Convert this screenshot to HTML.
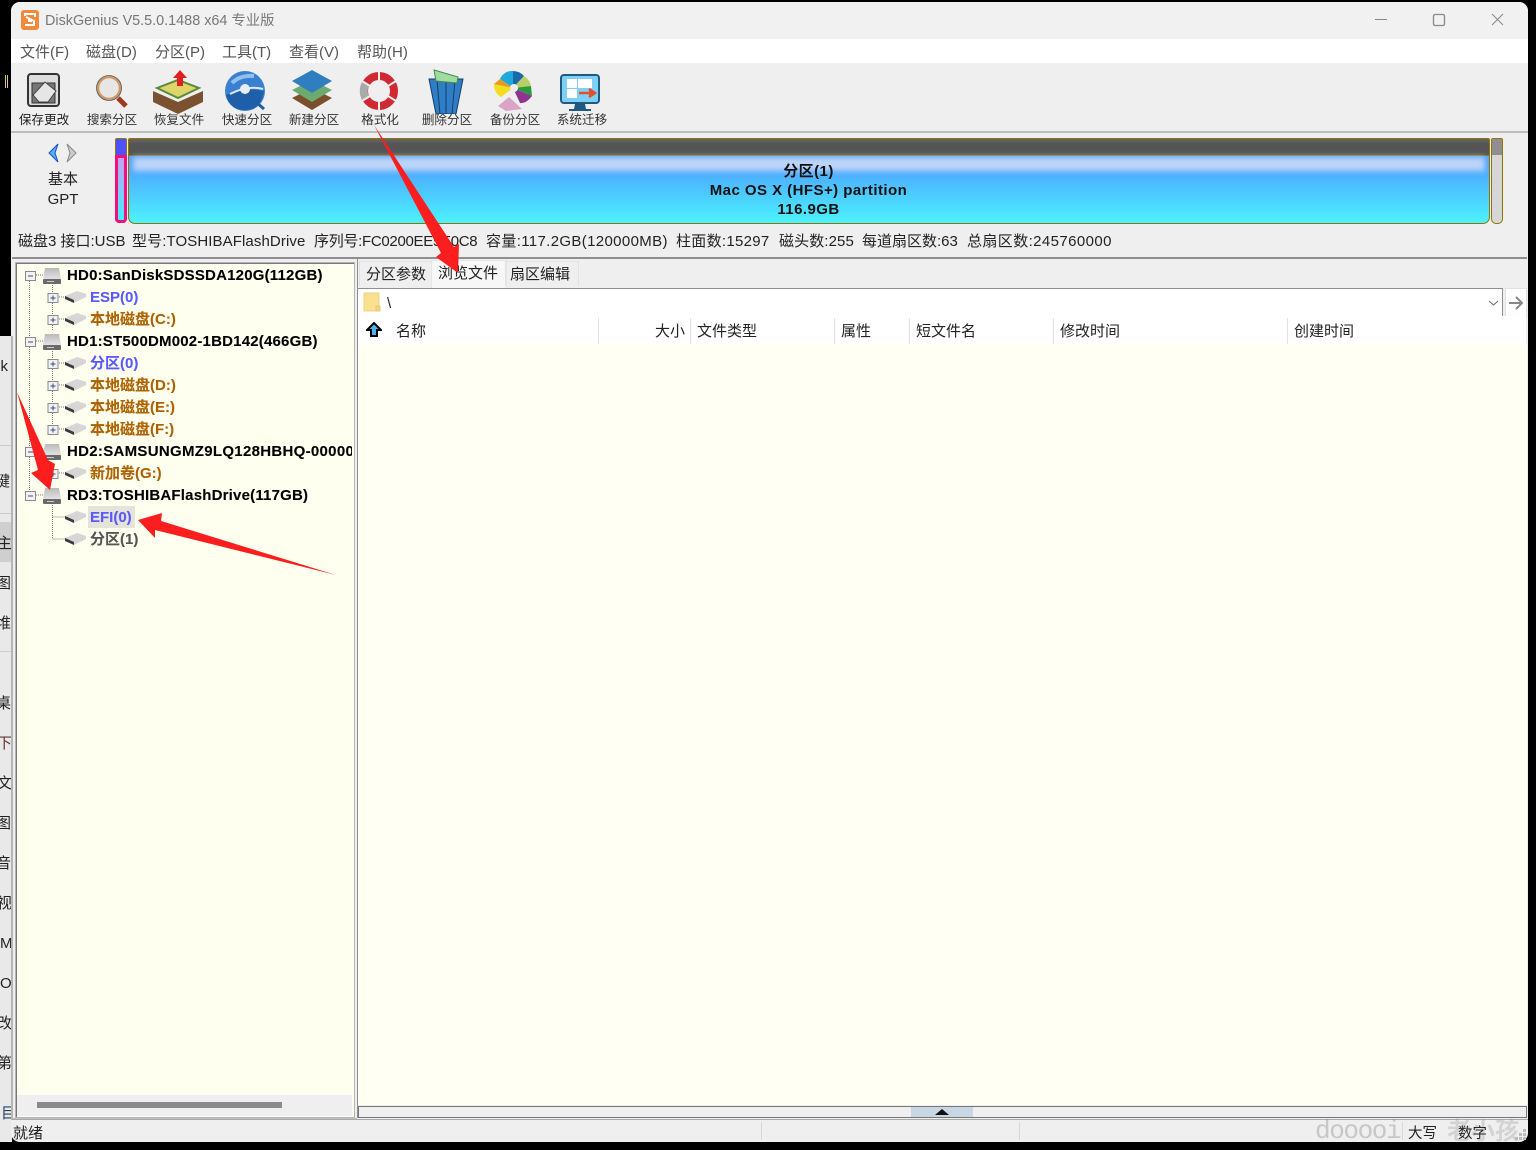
<!DOCTYPE html>
<html lang="zh"><head><meta charset="utf-8"><title>DiskGenius</title>
<style>
html,body{margin:0;padding:0;background:#000}
body{width:1536px;height:1150px;position:relative;overflow:hidden;font-family:"Liberation Sans","Noto Sans CJK SC",sans-serif;font-size:14px;color:#000}
.a{position:absolute;white-space:nowrap}
.m{top:44px;font-size:15px;line-height:18px;color:#555}
.tb{top:112px;font-size:12.6px;line-height:16px;color:#333;width:70px;text-align:center}
.tr{font-size:15px;font-weight:bold;line-height:20px;letter-spacing:.2px;-webkit-text-stroke:.1px;margin-top:1px}
.d{color:#000;left:67px}.p{left:90px;letter-spacing:0}.b{color:#5a5aff}.o{color:#ad6200}.g{color:#555}
.h{top:323px;font-size:15px;line-height:18px;color:#222}
.sep{position:absolute;top:318px;width:1px;height:26px;background:#e2e2e2}
.s{left:0;font-size:15px;width:11px;overflow:hidden;line-height:18px;color:#222}
.st{top:233px;font-size:15px;line-height:18px;color:#222}
</style></head><body>
<!-- behind window -->
<div class="a" style="left:0;top:336px;width:12px;height:806px;background:#e9e9e9"></div>
<div class="a" style="left:0;top:522px;width:12px;height:40px;background:#cfcfcf"></div>
<div class="a" style="left:0;top:445px;width:11px;height:1px;background:#ccc"></div>
<div class="a" style="left:0;top:513px;width:11px;height:1px;background:#ccc"></div>
<div class="a" style="left:0;top:651px;width:11px;height:1px;background:#ccc"></div>
<div class="a" style="left:5px;top:75px;width:1px;height:13px;background:#d8c890"></div>
<div class="a" style="left:7px;top:75px;width:1px;height:13px;background:#d8c890"></div>
<div class="a s" style="top:358px;text-indent:-7px">sk</div>
<div class="a s" style="top:473px;text-indent:-5px">键</div>
<div class="a s" style="top:535px;text-indent:-3px">主</div>
<div class="a s" style="top:575px;text-indent:-4px">图</div>
<div class="a s" style="top:615px;text-indent:-4px">堆</div>
<div class="a s" style="top:695px;text-indent:-4px">桌</div>
<div class="a s" style="top:735px;text-indent:-3px;color:#633">下</div>
<div class="a s" style="top:775px;text-indent:-3px">文</div>
<div class="a s" style="top:815px;text-indent:-4px">图</div>
<div class="a s" style="top:855px;text-indent:-4px">音</div>
<div class="a s" style="top:895px;text-indent:-3px">视</div>
<div class="a s" style="top:935px;text-indent:0">M</div>
<div class="a s" style="top:975px;text-indent:0">O</div>
<div class="a s" style="top:1015px;text-indent:-3px">改</div>
<div class="a s" style="top:1055px;text-indent:-3px">第</div>
<div class="a s" style="top:1105px;text-indent:1px;color:#246">目</div>

<!-- window -->
<div class="a" style="left:11px;top:2px;width:1517px;height:1140px;background:#efefef;border-radius:9px;overflow:hidden">
 <div class="a" style="left:0;top:0;width:1517px;height:37px;background:#f1f1f1"></div>
 <div class="a" style="left:0;top:37px;width:1517px;height:24px;background:#fff"></div>
 <div class="a" style="left:0;top:129px;width:1517px;height:2px;background:#bdbdbd"></div>
 <div class="a" style="left:0;top:334px;width:2px;height:784px;background:#b5b5b5"></div>
</div>
<!-- title -->
<svg class="a" style="left:21px;top:10px" width="18" height="20" viewBox="0 0 18 20"><rect width="18" height="20" rx="3" fill="#f08a3c"/><path d="M4 6V4h10v3M5 7l8 4v4H4" fill="none" stroke="#fff" stroke-width="2"/><rect x="7" y="9" width="4" height="3" fill="#fff"/></svg>
<div class="a" style="left:45px;top:12px;font-size:14.4px;line-height:18px;color:#777">DiskGenius V5.5.0.1488 x64 专业版</div>
<svg class="a" style="left:1370px;top:10px" width="145" height="20" fill="none" stroke="#888" stroke-width="1"><path d="M5 9.500h12"/><rect x="63.500" y="4.500" width="11" height="11" rx="1.500" stroke-width="1.300"/><path d="M122 4l11 11M133 4l-11 11"/></svg>
<!-- menu -->
<div class="a m" style="left:20px">文件(F)</div><div class="a m" style="left:86px">磁盘(D)</div><div class="a m" style="left:155px">分区(P)</div><div class="a m" style="left:222px">工具(T)</div><div class="a m" style="left:289px">查看(V)</div><div class="a m" style="left:357px">帮助(H)</div>

<!-- toolbar icons -->
<svg class="a" style="left:0;top:64px" width="620" height="50" viewBox="0 0 620 50">
 <rect x="28" y="10" width="31" height="32" rx="3" fill="#ddd" stroke="#333" stroke-width="2"/><rect x="32" y="19" width="23" height="20" fill="#777" stroke="#333"/><path d="M33 31l12-13 11 9-8 11H39z" fill="#e6e6e6" stroke="#444"/>
 <circle cx="109" cy="24" r="11" fill="#e6e6e6" stroke="#c96" stroke-width="2.500"/><circle cx="109" cy="24" r="12.500" fill="none" stroke="#555" stroke-width=".8"/><path d="M118 34l8 8" stroke="#9b3a1e" stroke-width="5"/>
 <path d="M153 27l25 11 25-11v11l-25 12-25-12z" fill="#7a5230"/><path d="M157 24l21-8 21 8-21 10z" fill="#ddd56a" stroke="#5a8a3a" stroke-width="2"/><path d="M177 22V14h-4l7-8 7 8h-4v8z" fill="#e02020"/>
 <circle cx="245" cy="27" r="20" fill="#3b7fd0"/><path d="M226 31q18-8 38-4-3 19-19 19-15 0-19-15z" fill="#1f5ea8"/><path d="M230 30q18-9 33-5" stroke="#dbe8f5" stroke-width="2" fill="none"/><path d="M232 19q8-8 22-7" stroke="#8fc0ee" stroke-width="4" fill="none"/><circle cx="245" cy="25" r="5" fill="#e8eef5"/><path d="M256 38l8 7" stroke="#1f5ea8" stroke-width="3"/>
 <path d="M292 34l20-10 20 10-20 12z" fill="#7a4f2c"/><path d="M292 26l20-10 20 10-20 12z" fill="#6bab6f"/><path d="M292 17l20-11 20 11-20 12z" fill="#2f7fc0"/>
 <circle cx="379" cy="27" r="15" fill="none" stroke="#cf2a33" stroke-width="8"/><path d="M365.500 20a15 15 0 0 0 0 14" fill="none" stroke="#aaa" stroke-width="8"/><path d="M379 7v9M379 38v9M362 17l8 5M396 17l-8 5M362 37l8-5M396 37l-8-5" stroke="#efefef" stroke-width="2"/>
 <path d="M429 15h34l-7 35h-20z" fill="#2f7ec4" stroke="#123f70"/><path d="M437 16l3 34M446 16v34M455 16l-3 34" stroke="#123f70"/><path d="M434 6l24 7-1 6-21-2z" fill="#9fdca0" stroke="#4a8a4a"/>
 <path d="M513 7a13 13 0 0 0-13 8l13 9z" fill="#1fa8dc"/><path d="M513 7a15 15 0 0 1 11 5l-11 12z" fill="#1a6aaa"/><path d="M524 12q6 4 7 10l-18 2z" fill="#b9cf65"/><path d="M531 22l1 10-19-8z" fill="#2b9a3d"/><path d="M532 32q-6 8-12 7l-7-15z" fill="#8d3590"/><path d="M494 20l6-5 13 9-17 3z" fill="#e99a20"/><path d="M494 20l19 4-12 9q-7-4-7-13z" fill="#f2dd1f"/><path d="M509 33l13 12-16 2-8-5z" fill="#d8a5c7"/><circle cx="514" cy="24" r="4" fill="#eee"/>
 <rect x="561" y="11" width="38" height="28" rx="3" fill="#7fd0f5" stroke="#1f5a80" stroke-width="2"/><rect x="567" y="15" width="10" height="9" fill="#fff"/><rect x="578" y="15" width="14" height="9" fill="#fff"/><rect x="567" y="25" width="10" height="9" fill="#fff"/><path d="M579 29h5m0 0h8m-3-4l6 4-6 4" stroke="#e0502a" stroke-width="2.500" fill="#e0502a"/><path d="M575 40h10l1 5h5v2h-22v-2h5z" fill="#1f5a80"/>
</svg>
<div class="a tb" style="left:9px;color:#222">保存更改</div><div class="a tb" style="left:77px">搜索分区</div><div class="a tb" style="left:144px">恢复文件</div><div class="a tb" style="left:212px">快速分区</div><div class="a tb" style="left:279px">新建分区</div><div class="a tb" style="left:345px">格式化</div><div class="a tb" style="left:412px">删除分区</div><div class="a tb" style="left:480px">备份分区</div><div class="a tb" style="left:547px">系统迁移</div>

<!-- disk bar -->
<svg class="a" style="left:46px;top:143px" width="34" height="20"><path d="M12 1L3 10l9 9 -3-9z" fill="#58aef5" stroke="#1a4fc0"/><path d="M21 1l9 9-9 9 3-9z" fill="#ccc" stroke="#888"/></svg>
<div class="a" style="left:23px;top:170px;width:80px;text-align:center;font-size:15px;line-height:20px;color:#222">基本<br>GPT</div>
<div class="a" style="left:115px;top:138px;width:10px;height:16px;background:#5050f8;border:1px solid #917400;border-radius:2px 2px 0 0"></div>
<div class="a" style="left:115px;top:155px;width:6px;height:62px;background:linear-gradient(#c8a0f0,#40f0ff);border:3px solid #f0107c;border-radius:0 0 4px 4px"></div>
<div class="a" style="left:128px;top:138px;width:1360px;height:84px;border:1px solid #917400;border-radius:2px 2px 7px 7px;background:linear-gradient(#4da2ff 30%,#4cf2ff 100%);overflow:hidden">
 <div class="a" style="left:0;top:0;width:100%;height:16px;background:linear-gradient(#666,#555 30%,#555);border-bottom:1px solid #917400"></div>
 <div class="a" style="left:4px;top:18px;width:1352px;height:14px;background:#bcd4f8;filter:blur(3px)"></div>
</div>
<div class="a" style="left:128px;top:162px;width:1361px;text-align:center;font-size:15px;font-weight:bold;line-height:19px;letter-spacing:.45px;color:#111">分区(1)<br>Mac OS X (HFS+) partition<br>116.9GB</div>
<div class="a" style="left:1491px;top:138px;width:10px;height:84px;border:1px solid #917400;border-radius:2px 2px 5px 5px;background:#d6d6d6"><div style="height:16px;background:#8f8f8f"></div></div>

<!-- info -->
<div class="a st" style="left:18px">磁盘3 接口:USB</div><div class="a st" style="left:132px;letter-spacing:.1px">型号:TOSHIBAFlashDrive</div><div class="a st" style="left:314px;letter-spacing:-.3px">序列号:FC0200EE5E0C8</div><div class="a st" style="left:486px;letter-spacing:.35px">容量:117.2GB(120000MB)</div><div class="a st" style="left:676px;letter-spacing:.3px">柱面数:15297</div><div class="a st" style="left:779px;letter-spacing:.1px">磁头数:255</div><div class="a st" style="left:862px">每道扇区数:63</div><div class="a st" style="left:967px;letter-spacing:.4px">总扇区数:245760000</div>

<!-- split -->
<div class="a" style="left:12px;top:257px;width:1515px;height:2px;background:#8f8f8f"></div>
<div class="a" style="left:15px;top:262px;width:338px;height:854px;background:#fffff0;border:1px solid #b5b5b5;box-shadow:inset 1px 1px 0 #777"></div>
<div class="a" style="left:17px;top:1095px;width:335px;height:21px;background:#efefef"></div>
<div class="a" style="left:37px;top:1102px;width:245px;height:6px;background:#8a8a8a"></div>
<div class="a" style="left:12px;top:1118px;width:345px;height:2px;background:#c0c0c0"></div>

<!-- tree lines & icons -->
<svg class="a" style="left:16px;top:263px;width:336px;height:300px" width="336" height="300">
 <defs>
  <linearGradient id="dk" x1="0" y1="0" x2="0" y2="1"><stop offset="0" stop-color="#bbb"/><stop offset="1" stop-color="#e2e2e2"/></linearGradient>
  <g id="hd"><path d="M29 5h14l2 11H27z" fill="url(#dk)"/><rect x="27" y="16" width="18" height="5" rx="1" fill="#6a6a6a"/><rect x="31" y="18" width="7" height="1" fill="#ccc"/></g>
  <g id="pt"><path d="M49 33l12-5 9 3v3l-12 6z" fill="#d6d6d6"/><path d="M49 33l9 4v3l-9-4z" fill="#3a3a3a"/></g>
 </defs>
 <g stroke="#777" stroke-dasharray="1 1" fill="none"><path d="M13.500 18V232M36.500 18V68M36.500 84V172M36.500 234V276h13M36.500 254h13M20 12h7M20 78h7M20 188h7M20 232h7M43 34h6M43 56h6M43 100h6M43 122h6M43 144h6M43 166h6M43 210h6"/></g>
 <g fill="#f2f2f2" stroke="#8a8a8a"><rect x="9.500" y="8.500" width="10" height="9"/><rect x="9.500" y="74.500" width="10" height="9"/><rect x="9.500" y="184.500" width="10" height="9"/><rect x="9.500" y="228.500" width="10" height="9"/>
 <rect x="32" y="30.500" width="10" height="9"/><rect x="32" y="52.500" width="10" height="9"/><rect x="32" y="96.500" width="10" height="9"/><rect x="32" y="118.500" width="10" height="9"/><rect x="32" y="140.500" width="10" height="9"/><rect x="32" y="162.500" width="10" height="9"/><rect x="32" y="206.500" width="10" height="9"/></g>
 <path d="M12 13h5M12 79h5M12 189h5M12 233h5M34.500 35h5M34.500 57h5M34.500 101h5M34.500 123h5M34.500 145h5M34.500 167h5M34.500 211h5M37 32.500v5M37 54.500v5M37 98.500v5M37 120.500v5M37 142.500v5M37 164.500v5M37 208.500v5" stroke="#34508a"/>
 <use href="#hd"/><use href="#hd" y="66"/><use href="#hd" y="176"/><use href="#hd" y="220"/>
 <use href="#pt"/><use href="#pt" y="22"/><use href="#pt" y="66"/><use href="#pt" y="88"/><use href="#pt" y="110"/><use href="#pt" y="132"/><use href="#pt" y="176"/><use href="#pt" y="220"/><use href="#pt" y="242"/>
</svg>
<div class="a" style="left:88px;top:506px;width:47px;height:22px;background:#e4e4d8"></div>
<div class="a tr d" style="top:265px">HD0:SanDiskSDSSDA120G(112GB)</div>
<div class="a tr p b" style="top:287px">ESP(0)</div>
<div class="a tr p o" style="top:309px">本地磁盘(C:)</div>
<div class="a tr d" style="top:331px">HD1:ST500DM002-1BD142(466GB)</div>
<div class="a tr p b" style="top:353px">分区(0)</div>
<div class="a tr p o" style="top:375px">本地磁盘(D:)</div>
<div class="a tr p o" style="top:397px">本地磁盘(E:)</div>
<div class="a tr p o" style="top:419px">本地磁盘(F:)</div>
<div class="a tr d" style="top:441px;width:285px;overflow:hidden;letter-spacing:.3px">HD2:SAMSUNGMZ9LQ128HBHQ-00000</div>
<div class="a tr p o" style="top:463px">新加卷(G:)</div>
<div class="a tr d" style="top:485px">RD3:TOSHIBAFlashDrive(117GB)</div>
<div class="a tr p b" style="top:507px">EFI(0)</div>
<div class="a tr p g" style="top:529px">分区(1)</div>

<!-- right pane -->
<div class="a" style="left:357px;top:259px;width:1170px;height:859px;background:#efefef;border-left:1px solid #8f8f8f"></div>
<div class="a" style="left:359px;top:261px;width:71px;height:24px;border:1px solid #e2e2e2;border-bottom:0"></div>
<div class="a" style="left:431px;top:260px;width:74px;height:27px;background:#f7f7f7;border:1px solid #e6e6e6;border-bottom:0"></div>
<div class="a" style="left:505px;top:261px;width:72px;height:24px;border:1px solid #e2e2e2;border-bottom:0"></div>
<div class="a" style="left:366px;top:266px;font-size:15px;line-height:18px;color:#222">分区参数</div>
<div class="a" style="left:438px;top:265px;font-size:15px;line-height:18px;color:#222">浏览文件</div>
<div class="a" style="left:510px;top:266px;font-size:15px;line-height:18px;color:#222">扇区编辑</div>
<div class="a" style="left:358px;top:288px;width:1144px;height:27px;background:#fff;border:1px solid #8f8f8f;border-left:0"></div>
<div class="a" style="left:1505px;top:288px;width:20px;height:28px;background:#fdfdfd;border:1px solid #e2e2e2"></div>
<svg class="a" style="left:1487px;top:294px" width="40" height="18" fill="none"><path d="M2 7l4.500 4 4.500-4" stroke="#666"/><path d="M22 9h12M29 3l6 6-6 6" stroke="#888" stroke-width="2"/></svg>
<svg class="a" style="left:363px;top:292px" width="18" height="20"><rect x="1" y="1" width="15" height="18" fill="#fbe08e" stroke="#ecd48c"/><path d="M13 19v-5h4v5z" fill="#f6d77a" stroke="#e4c97a"/></svg>
<div class="a" style="left:387px;top:295px;font-size:15px;line-height:18px;color:#222">\</div>
<div class="a" style="left:358px;top:316px;width:1168px;height:28px;background:#fff"></div>
<div class="a" style="left:358px;top:344px;width:1169px;height:761px;background:#fffff3"></div>
<svg class="a" style="left:366px;top:322px" width="16" height="16"><path d="M8 1l7 7h-4v6H5V8H1z" fill="#4fb0ef" stroke="#000" stroke-width="2"/></svg>
<div class="a h" style="left:396px">名称</div><div class="a h" style="left:655px">大小</div><div class="a h" style="left:697px">文件类型</div><div class="a h" style="left:841px">属性</div><div class="a h" style="left:916px">短文件名</div><div class="a h" style="left:1060px">修改时间</div><div class="a h" style="left:1294px">创建时间</div>
<div class="sep" style="left:598px"></div><div class="sep" style="left:690px"></div><div class="sep" style="left:834px"></div><div class="sep" style="left:909px"></div><div class="sep" style="left:1053px"></div><div class="sep" style="left:1287px"></div>
<div class="a" style="left:358px;top:1106px;width:1167px;height:10px;background:#efefef;border:1px solid #777"></div>
<div class="a" style="left:911px;top:1107px;width:62px;height:10px;background:#c9d6e3"></div>
<svg class="a" style="left:934px;top:1108px" width="16" height="8"><path d="M1 7l7-6 7 6z" fill="#111"/></svg>

<!-- status -->
<div class="a" style="left:12px;top:1119px;width:1516px;height:1px;background:#aaa"></div>
<div class="a" style="left:761px;top:1122px;width:1px;height:18px;background:#d8d8d8"></div>
<div class="a" style="left:1019px;top:1122px;width:1px;height:18px;background:#d8d8d8"></div>
<div class="a" style="left:1402px;top:1122px;width:1px;height:18px;background:#d8d8d8"></div>
<div class="a" style="left:1315px;top:1115px;font-family:'Liberation Mono',monospace;font-size:26px;line-height:32px;letter-spacing:-1.400px;color:rgba(140,140,140,.4)">dooooi</div>
<div class="a" style="left:1447px;top:1113px;font-family:'Noto Sans CJK SC',sans-serif;font-weight:bold;font-size:24px;line-height:32px;color:rgba(140,140,140,.28)">老小孩</div>
<div class="a" style="left:13px;top:1125px;font-size:15px;line-height:18px;color:#222">就绪</div>
<div class="a" style="left:1408px;top:1125px;font-size:14.500px;line-height:18px;color:#222">大写</div>
<div class="a" style="left:1458px;top:1125px;font-size:14.500px;line-height:18px;color:#222">数字</div>
<svg class="a" style="left:1514px;top:1128px" width="14" height="14" fill="#bbb"><rect x="9" y="1" width="3" height="3"/><rect x="5" y="5" width="3" height="3"/><rect x="9" y="5" width="3" height="3"/><rect x="1" y="9" width="3" height="3"/><rect x="5" y="9" width="3" height="3"/><rect x="9" y="9" width="3" height="3"/></svg>

<!-- annotations -->
<svg class="a" style="left:0;top:0" width="1536" height="1150">
 <g fill="#fa1e1e">
 <path d="M374 125L454 247 459 244 458 273 436 257 441 253z"/>
 <path d="M17 392L48 460 55 464 50 490 31 473 38 470z"/>
 <path d="M336 575L161 521 162 513 138 520 155 538 155 530z"/>
 </g>
</svg>
</body></html>
